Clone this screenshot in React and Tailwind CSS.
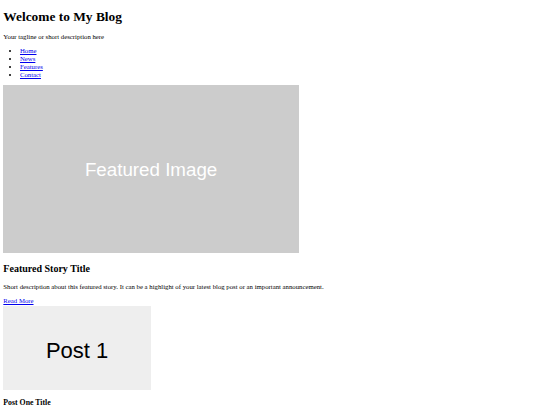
const navLinks = ['Home', 'News', 'Features', 'Contact']

export default function App() {
  return (
    <div className="bg-white text-black font-['Liberation_Serif',serif] text-[6.75px] leading-[1.15] px-[3.33px] pb-[8px]">
      <header>
        <h1 className="text-[13.4px] font-bold pt-[8.6px] mb-[8.93px]">Welcome to My Blog</h1>
        <p className="mb-[6.67px]">Your tagline or short description here</p>
        <nav>
          <ul className="list-disc pl-[16.67px] mb-[6.5px]">
            {navLinks.map(link => (
              <li key={link}>
                <a href="#" className="text-[#0000ee] underline">{link}</a>
              </li>
            ))}
          </ul>
        </nav>
      </header>

      <section>
        <div className="w-[295.5px] h-[168.5px] bg-[#cccccc] flex items-center justify-center pt-[1px] font-['Liberation_Sans',sans-serif] text-[18.75px] text-white">
          Featured Image
        </div>
        <h2 className="text-[10px] font-bold mt-[9.8px] mb-[8.3px]">Featured Story Title</h2>
        <p className="mb-[6.67px]">
          Short description about this featured story. It can be a highlight of your latest blog post or an important announcement.
        </p>
        <a href="#" className="text-[#0000ee] underline">Read More</a>
      </section>

      <section className="mt-[1px]">
        <article>
          <div className="w-[147.5px] h-[84px] bg-[#eeeeee] flex items-center justify-center pt-[6px] font-['Liberation_Sans',sans-serif] text-[22px] text-black">
            Post 1
          </div>
          <h3 className="text-[7.8px] font-bold mt-[9.3px] mb-[7.8px]">Post One Title</h3>
          <p>Short summary of the first post.</p>
        </article>
      </section>
    </div>
  )
}
